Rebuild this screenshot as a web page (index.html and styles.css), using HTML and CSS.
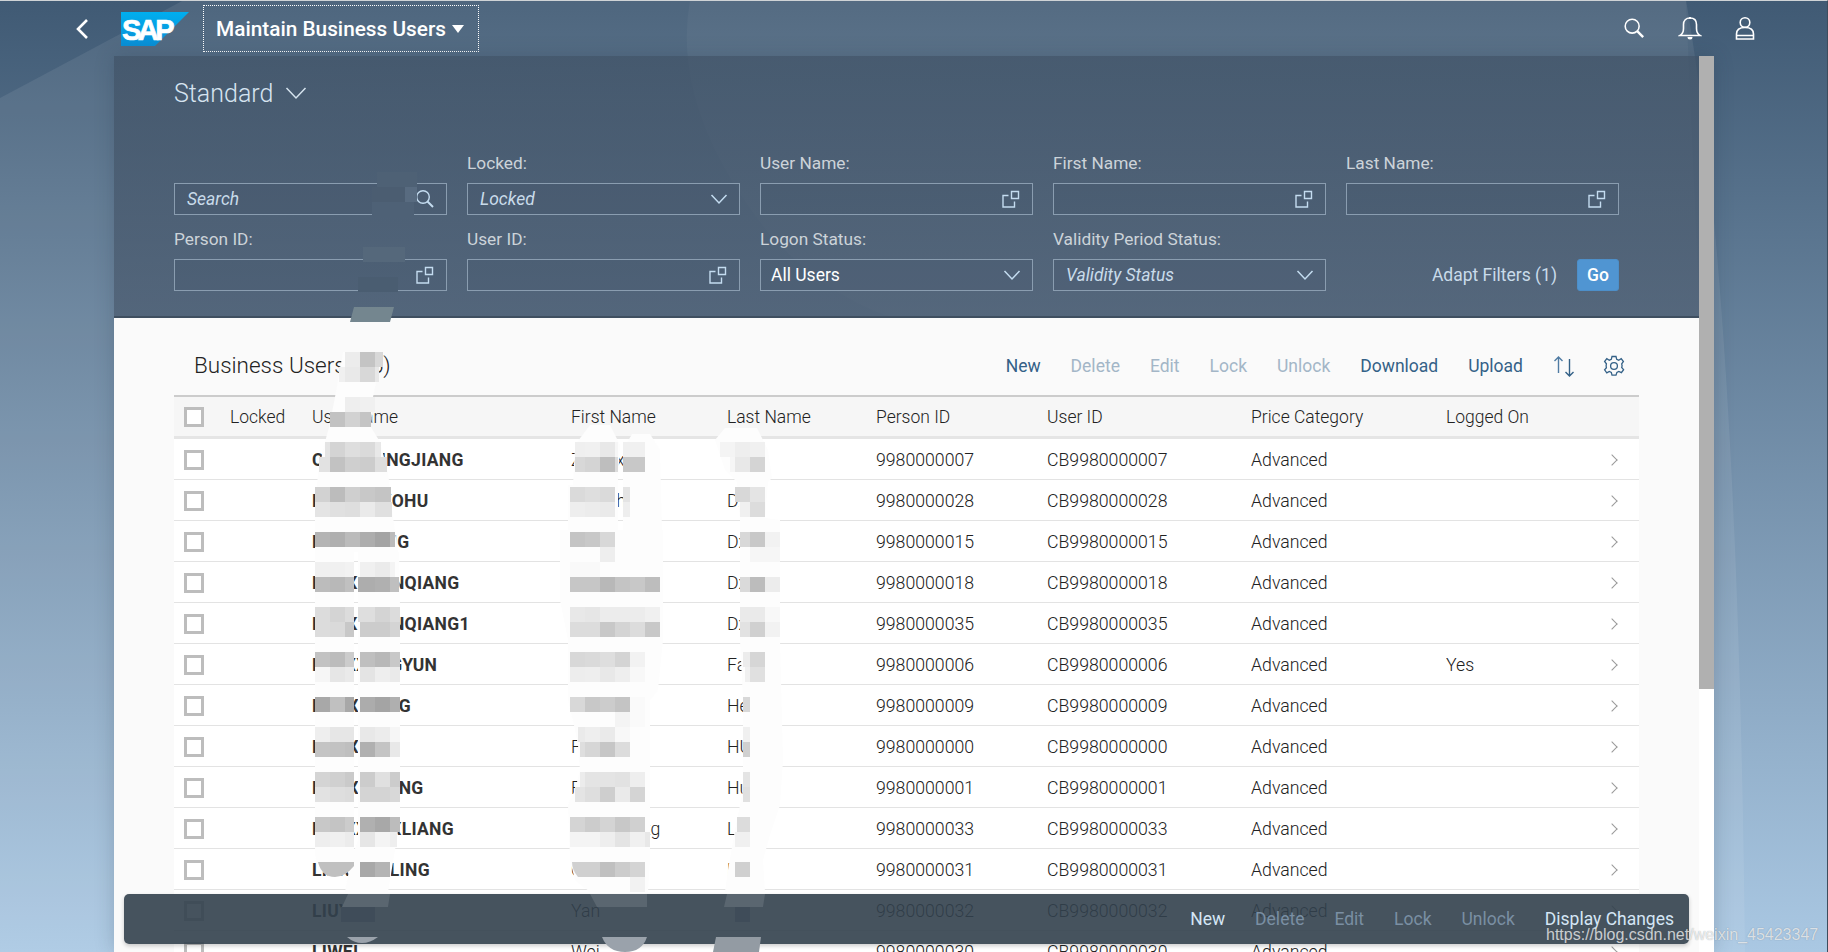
FILE: index.html
```html
<!DOCTYPE html>
<html lang="en">
<head>
<meta charset="utf-8">
<title>Maintain Business Users</title>
<link rel="stylesheet" href="styles.css">
</head>
<body>
<svg class="backdrop" width="1828" height="952" viewBox="0 0 1828 952" aria-hidden="true">
  <path d="M184 0L0 98V952H1745Q1738 300 1686 0Z" fill="#fff" opacity=".08"/>
  <path d="M690 0Q670 110 770 235Q830 300 900 320H1700L1686 0Z" fill="#fff" opacity=".035"/>
</svg>

<header class="shell">
  <button class="back" aria-label="Back">
    <svg width="14" height="22" viewBox="0 0 14 22"><path d="M12 2L3 11l9 9" fill="none" stroke="#fff" stroke-width="2.6"/></svg>
  </button>
  <svg class="logo" width="68" height="34" viewBox="0 0 68 34">
    <defs><linearGradient id="sap" x1="0" y1="0" x2="0" y2="1"><stop offset="0" stop-color="#00aeef"/><stop offset="1" stop-color="#0a8fd6"/></linearGradient></defs>
    <path d="M0 0H68L34 34H0Z" fill="url(#sap)"/>
    <text x="1" y="28" class="logo-text">SAP</text>
  </svg>
  <div class="app-title">Maintain Business Users<span class="caret"></span></div>
  <div class="shell-actions">
    <svg width="22" height="22" viewBox="0 0 24 24"><circle cx="10" cy="10" r="7.6" fill="none" stroke="#fff" stroke-width="1.7"/><path d="M15.5 15.5L22 22" stroke="#fff" stroke-width="2.6"/></svg>
    <svg width="24" height="24" viewBox="0 0 24 24"><path d="M2 19.5c2.5-1.5 3.5-3.5 3.5-7V8.5C5.500 4.500 8 2 12 2s6.500 2.500 6.500 6.500v4c0 3.500 1 5.500 3.500 7z" fill="none" stroke="#fff" stroke-width="1.6"/><path d="M9.500 21h5a2.500 2.500 0 0 1-5 0zM11 1h2v2h-2z" fill="#fff"/></svg>
    <svg width="20" height="24" viewBox="0 0 20 24"><circle cx="10" cy="6.500" r="4.800" fill="none" stroke="#fff" stroke-width="1.600"/><path d="M1.500 23v-5c0-4 3-6.500 8.500-6.500s8.500 2.500 8.500 6.500v5zM1.500 19.500h17" fill="none" stroke="#fff" stroke-width="1.600"/></svg>
  </div>
</header>

<div class="frame">
  <main class="content">
    <section class="filterbar">
      <h1 class="variant">Standard
        <svg width="22" height="14" viewBox="0 0 22 14"><path d="M1.500 2L11 12l9.500-10" fill="none" stroke="#d5e3ee" stroke-width="1.500"/></svg>
      </h1>
      <div class="filters">
        <div class="field">
          <span class="flabel"></span>
          <div class="input"><span class="ph">Search</span>
            <svg class="ico" width="20" height="20" viewBox="0 0 20 20"><circle cx="8" cy="8" r="6.300" fill="none" stroke="#c4dcf0" stroke-width="1.400"/><path d="M12.500 12.500L18 18" stroke="#c4dcf0" stroke-width="2"/></svg>
          </div>
        </div>
        <div class="field">
          <span class="flabel">Locked:</span>
          <div class="input"><span class="ph">Locked</span>
            <svg class="ico" width="18" height="12" viewBox="0 0 18 12"><path d="M1.500 2L9 10l7.500-8" fill="none" stroke="#c4dcf0" stroke-width="1.500"/></svg>
          </div>
        </div>
        <div class="field">
          <span class="flabel">User Name:</span>
          <div class="input">
            <svg class="ico" width="20" height="20" viewBox="0 0 20 20"><path d="M10.500 2.500h7v7h-7zM7.500 6.500h-5.500v11.500h11.500v-5.500" fill="none" stroke="#c4dcf0" stroke-width="1.400"/></svg>
          </div>
        </div>
        <div class="field">
          <span class="flabel">First Name:</span>
          <div class="input">
            <svg class="ico" width="20" height="20" viewBox="0 0 20 20"><path d="M10.500 2.500h7v7h-7zM7.500 6.500h-5.500v11.500h11.500v-5.500" fill="none" stroke="#c4dcf0" stroke-width="1.400"/></svg>
          </div>
        </div>
        <div class="field">
          <span class="flabel">Last Name:</span>
          <div class="input">
            <svg class="ico" width="20" height="20" viewBox="0 0 20 20"><path d="M10.500 2.500h7v7h-7zM7.500 6.500h-5.500v11.500h11.500v-5.500" fill="none" stroke="#c4dcf0" stroke-width="1.400"/></svg>
          </div>
        </div>
        <div class="field">
          <span class="flabel">Person ID:</span>
          <div class="input">
            <svg class="ico" width="20" height="20" viewBox="0 0 20 20"><path d="M10.500 2.500h7v7h-7zM7.500 6.500h-5.500v11.500h11.500v-5.500" fill="none" stroke="#c4dcf0" stroke-width="1.400"/></svg>
          </div>
        </div>
        <div class="field">
          <span class="flabel">User ID:</span>
          <div class="input">
            <svg class="ico" width="20" height="20" viewBox="0 0 20 20"><path d="M10.500 2.500h7v7h-7zM7.500 6.500h-5.500v11.500h11.500v-5.500" fill="none" stroke="#c4dcf0" stroke-width="1.400"/></svg>
          </div>
        </div>
        <div class="field">
          <span class="flabel">Logon Status:</span>
          <div class="input"><span class="val">All Users</span>
            <svg class="ico" width="18" height="12" viewBox="0 0 18 12"><path d="M1.500 2L9 10l7.500-8" fill="none" stroke="#c4dcf0" stroke-width="1.500"/></svg>
          </div>
        </div>
        <div class="field">
          <span class="flabel">Validity Period Status:</span>
          <div class="input"><span class="ph">Validity Status</span>
            <svg class="ico" width="18" height="12" viewBox="0 0 18 12"><path d="M1.500 2L9 10l7.500-8" fill="none" stroke="#c4dcf0" stroke-width="1.500"/></svg>
          </div>
        </div>
        <div class="field actions">
          <span class="adapt">Adapt Filters (1)</span>
          <button class="go">Go</button>
        </div>
      </div>
    </section>

    <section class="list">
      <div class="toolbar">
        <h2 class="list-title">Business Users (36)</h2>
        <div class="tools">
          <span class="tool">New</span>
          <span class="tool off">Delete</span>
          <span class="tool off">Edit</span>
          <span class="tool off">Lock</span>
          <span class="tool off">Unlock</span>
          <span class="tool">Download</span>
          <span class="tool">Upload</span>
          <svg class="sort" width="22" height="22" viewBox="0 0 22 22"><path d="M5.500 18V2M1.500 6l4-4 4 4" fill="none" stroke="#4f7ba3" stroke-width="1.400"/><path d="M16.500 4v17M12.500 17l4 4 4-4" fill="none" stroke="#346187" stroke-width="1.400"/></svg>
          <svg width="22" height="22" viewBox="0 0 22 22"><path d="M9 1.500h4l.7 2.800 2 .9 2.500-1.500 2.200 2.800-1.700 2.300.4 2-.4 1.700 1.900 2.200-2.200 3-2.600-1.300-1.900 1-.9 2.800H9l-.7-2.800-2-1-2.500 1.400-2.200-3 1.800-2.100-.3-1.900.3-2L1.600 6.500l2.200-2.800 2.500 1.500 2-.9z" fill="none" stroke="#346187" stroke-width="1.300"/><circle cx="11" cy="11" r="3.400" fill="none" stroke="#346187" stroke-width="1.300"/></svg>
        </div>
      </div>
      <table class="users">
        <colgroup>
          <col class="c-check"><col class="c-locked"><col class="c-user"><col class="c-first"><col class="c-last"><col class="c-person"><col class="c-uid"><col class="c-price"><col class="c-logged"><col class="c-nav">
        </colgroup>
        <thead>
          <tr><th><span class="box"></span></th><th>Locked</th><th>User Name</th><th>First Name</th><th>Last Name</th><th>Person ID</th><th>User ID</th><th>Price Category</th><th>Logged On</th><th></th></tr>
        </thead>
        <tbody>
          <tr><td><span class="box"></span></td><td></td><td class="uname">CXXXXXINGJIANG</td><td>Zxxxxxa</td><td></td><td>9980000007</td><td>CB9980000007</td><td>Advanced</td><td></td><td><span class="nav"></span></td></tr>
          <tr><td><span class="box"></span></td><td></td><td class="uname">DXXXXXXOHU</td><td>Xxxxxhu</td><td>Dxxx</td><td>9980000028</td><td>CB9980000028</td><td>Advanced</td><td></td><td><span class="nav"></span></td></tr>
          <tr><td><span class="box"></span></td><td></td><td class="uname">DXXXXXXIG</td><td>Xxxx</td><td>Dxxx</td><td>9980000015</td><td>CB9980000015</td><td>Advanced</td><td></td><td><span class="nav"></span></td></tr>
          <tr><td><span class="box"></span></td><td></td><td class="uname">DXXXXXXNQIANG</td><td>Xxxxx</td><td>Dxxx</td><td>9980000018</td><td>CB9980000018</td><td>Advanced</td><td></td><td><span class="nav"></span></td></tr>
          <tr><td><span class="box"></span></td><td></td><td class="uname">DXXXXXXNQIANG1</td><td>Xxxxx</td><td>Dxxx</td><td>9980000035</td><td>CB9980000035</td><td>Advanced</td><td></td><td><span class="nav"></span></td></tr>
          <tr><td><span class="box"></span></td><td></td><td class="uname">FXXXXXXGYUN</td><td>Xxxxx</td><td>Fan</td><td>9980000006</td><td>CB9980000006</td><td>Advanced</td><td>Yes</td><td><span class="nav"></span></td></tr>
          <tr><td><span class="box"></span></td><td></td><td class="uname">HXXXXXXIG</td><td>Xxxxx</td><td>Hexx</td><td>9980000009</td><td>CB9980000009</td><td>Advanced</td><td></td><td><span class="nav"></span></td></tr>
          <tr><td><span class="box"></span></td><td></td><td class="uname">HXXXXX</td><td>Fxxxx</td><td>HUxx</td><td>9980000000</td><td>CB9980000000</td><td>Advanced</td><td></td><td><span class="nav"></span></td></tr>
          <tr><td><span class="box"></span></td><td></td><td class="uname">HXXXXXXING</td><td>Fxxxx</td><td>Huxx</td><td>9980000001</td><td>CB9980000001</td><td>Advanced</td><td></td><td><span class="nav"></span></td></tr>
          <tr><td><span class="box"></span></td><td></td><td class="uname">LXXXXXXXLIANG</td><td>Xxxxxxxxxg</td><td>Lixx</td><td>9980000033</td><td>CB9980000033</td><td>Advanced</td><td></td><td><span class="nav"></span></td></tr>
          <tr><td><span class="box"></span></td><td></td><td class="uname">LIXXXXXILING</td><td>Cxxxx</td><td>Lxxx</td><td>9980000031</td><td>CB9980000031</td><td>Advanced</td><td></td><td><span class="nav"></span></td></tr>
          <tr><td><span class="box"></span></td><td></td><td class="uname">LIUY</td><td>Yan</td><td></td><td>9980000032</td><td>CB9980000032</td><td>Advanced</td><td></td><td><span class="nav"></span></td></tr>
          <tr><td><span class="box"></span></td><td></td><td class="uname">LIWEI</td><td>Wei</td><td></td><td>9980000030</td><td>CB9980000030</td><td>Advanced</td><td></td><td><span class="nav"></span></td></tr>
        </tbody>
      </table>
    </section>
  </main>
  <div class="scrollbar"><div class="thumb"></div></div>
</div>

<footer class="footer">
  <span class="fbtn">New</span>
  <span class="fbtn off">Delete</span>
  <span class="fbtn off">Edit</span>
  <span class="fbtn off">Lock</span>
  <span class="fbtn off">Unlock</span>
  <span class="fbtn">Display Changes</span>
</footer>

<svg class="mask" width="1828" height="952" viewBox="0 0 1828 952" aria-hidden="true">
  <g fill="#4c5f74">
    <rect width="40" x="377" y="172" height="15" fill="#4e6175"/>
    <rect width="33" x="372" y="187" height="15" fill="#4b5d71"/>
    <rect width="12" x="405" y="187" height="15" fill="#586b80"/>
    <rect width="42" x="372" y="202" height="15" fill="#4e6176"/>
    <rect width="42" x="363" y="247" height="15" fill="#55687b"/>
    <rect width="40" x="358" y="277" height="15" fill="#4a5d71"/>
  </g>
  <path d="M354 307H394L390 322H350Z" fill="#74868f"/>

  <g fill="#fdfdfd">
    <path d="M343 352H383L373 397L371 427L380 442L388 472L393 517L398 552H315L315 517L318 472L325 442L329 427L335 397Z"/>
    <path d="M315 552H354V865Q345 877 335 877Q320 877 315 855Z"/>
    <path d="M358 552H399L400 607V817L395 850L388 892H345L351 860L358 840Z"/>
    <path d="M575 445L590 425H610L620 445L618 480V530H568V485H573Z"/>
    <path d="M623 450L632 434H650L660 450L662 530H623Z"/>
    <path d="M560 530H663V640L658 690L650 700V860L648 892H590L575 880L570 860L568 805L575 790L580 770L578 745L574 725L568 700V640L560 600Z"/>
    <path d="M715 440L725 428H757L768 450L772 478L768 482L765 518L780 520V640L783 760L780 805L770 835L763 860L765 892H725L728 870L735 830L743 790V700L740 640V520L737 482L725 470Z"/>
  </g>

  <g class="cells">
    <g transform="translate(0 352)"><rect x="345" fill="#ececec"/><rect x="360" fill="#c4c4c4"/><rect x="375" width="8" fill="#d8d8d8"/></g>
    <g transform="translate(0 367)"><rect x="339" width="6" fill="#f0f0f0"/><rect x="345" fill="#e9e9e9"/><rect x="360" fill="#d8d8d8"/><rect x="375" width="4" fill="#e8e8e8"/></g>
    <g transform="translate(0 397)"><rect x="345" fill="#eee"/><rect x="360" fill="#f0f0f0"/></g>
    <g transform="translate(0 412)"><rect x="330" fill="#c2c2c2"/><rect x="345" fill="#d2d2d2"/><rect x="360" width="11" fill="#c4c4c4"/></g>
    <g transform="translate(0 442)"><rect x="325" width="5" fill="#e4e4e4"/><rect x="330" fill="#d4d4d4"/><rect x="345" fill="#dedede"/><rect x="360" fill="#dadada"/><rect x="375" width="6" fill="#e8e8e8"/>
      <rect x="575" width="10" fill="#efefef"/><rect x="585" fill="#f0f0f0"/><rect x="600" fill="#e8e8e8"/><rect x="615" width="3" fill="#f6f6f6"/><rect x="623" width="22" fill="#f0f0f0"/>
      <rect x="720" fill="#f4f4f4"/><rect x="735" fill="#eee"/><rect x="750" fill="#f0f0f0"/></g>
    <g transform="translate(0 457)"><rect x="319" width="11" fill="#e2e2e2"/><rect x="330" fill="#c2c2c2"/><rect x="345" fill="#cfcfcf"/><rect x="360" fill="#ccc"/><rect x="375" width="12" fill="#dedede"/>
      <rect x="575" width="10" fill="#d8d8d8"/><rect x="585" fill="#d4d4d4"/><rect x="600" fill="#bebebe"/><rect x="615" width="3" fill="#dcdcdc"/><rect x="623" width="22" fill="#c8c8c8"/>
      <rect x="730" width="5" fill="#f6f6f6"/><rect x="735" fill="#e8e8e8"/><rect x="750" fill="#d4d4d4"/></g>
    <g transform="translate(0 487)"><rect x="315" fill="#d2d2d2"/><rect x="330" fill="#bcbcbc"/><rect x="345" fill="#cfcfcf"/><rect x="360" fill="#c8c8c8"/><rect x="375" width="16" fill="#c4c4c4"/>
      <rect x="570" fill="#dadada"/><rect x="585" fill="#dedede"/><rect x="600" fill="#dadada"/><rect x="623" width="7" fill="#e4e4e4"/>
      <rect x="735" fill="#d8d8d8"/><rect x="750" fill="#e4e4e4"/></g>
    <g transform="translate(0 502)"><rect x="315" fill="#e4e4e4"/><rect x="330" fill="#e0e0e0"/><rect x="345" fill="#dedede"/><rect x="360" fill="#eaeaea"/><rect x="375" width="17" fill="#e0e0e0"/>
      <rect x="570" fill="#eee"/><rect x="585" fill="#ececec"/><rect x="600" fill="#eaeaea"/><rect x="623" width="7" fill="#eee"/>
      <rect x="740" width="10" fill="#f0f0f0"/><rect x="750" fill="#dcdcdc"/></g>
    <g transform="translate(0 532)"><rect x="315" fill="#b4b4b4"/><rect x="330" fill="#afafaf"/><rect x="345" fill="#bbb"/><rect x="360" fill="#adadad"/><rect x="375" fill="#a4a4a4"/><rect x="390" width="5" fill="#bbb"/>
      <rect x="570" fill="#c4c4c4"/><rect x="585" fill="#c8c8c8"/><rect x="600" fill="#d8d8d8"/>
      <rect x="740" width="10" fill="#d8d8d8"/><rect x="750" fill="#c8c8c8"/><rect x="765" fill="#f2f2f2"/></g>
    <g transform="translate(0 547)"><rect x="600" fill="#eee"/><rect x="750" fill="#f6f6f6"/><rect x="765" fill="#f6f6f6"/></g>
    <g transform="translate(0 562)"><rect x="315" fill="#f0f0f0"/><rect x="330" fill="#f0f0f0"/><rect x="345" width="9" fill="#f2f2f2"/><rect x="360" fill="#f0f0f0"/><rect x="375" fill="#ebebeb"/><rect x="390" width="5" fill="#f4f4f4"/>
      <rect x="570" fill="#f9f9f9"/><rect x="585" fill="#f9f9f9"/></g>
    <g transform="translate(0 577)"><rect x="315" fill="#bcbcbc"/><rect x="330" fill="#b8b8b8"/><rect x="345" width="9" fill="#c0c0c0"/><rect x="358" width="17" fill="#adadad"/><rect x="375" fill="#b0b0b0"/><rect x="390" width="9" fill="#bfbfbf"/>
      <rect x="570" fill="#c6c6c6"/><rect x="585" fill="#c6c6c6"/><rect x="600" fill="#b8b8b8"/><rect x="615" fill="#c4c4c4"/><rect x="630" fill="#c8c8c8"/><rect x="645" fill="#bdbdbd"/>
      <rect x="740" width="10" fill="#dadada"/><rect x="750" fill="#bcbcbc"/><rect x="765" fill="#ececec"/></g>
    <g transform="translate(0 607)"><rect x="315" fill="#dcdcdc"/><rect x="330" fill="#d4d4d4"/><rect x="345" width="9" fill="#dcdcdc"/><rect x="358" width="17" fill="#dedede"/><rect x="375" fill="#d4d4d4"/><rect x="390" width="10" fill="#dcdcdc"/>
      <rect x="570" fill="#e8e8e8"/><rect x="585" fill="#e6e6e6"/><rect x="600" fill="#ececec"/><rect x="615" fill="#ececec"/><rect x="630" fill="#ececec"/><rect x="645" fill="#f0f0f0"/>
      <rect x="740" width="10" fill="#eaeaea"/><rect x="750" fill="#eaeaea"/><rect x="765" fill="#f8f8f8"/></g>
    <g transform="translate(0 622)"><rect x="315" fill="#dcdcdc"/><rect x="330" fill="#dadada"/><rect x="345" width="9" fill="#c8c8c8"/><rect x="360" fill="#ccc"/><rect x="375" fill="#ccc"/><rect x="390" width="10" fill="#d4d4d4"/>
      <rect x="570" fill="#dcdcdc"/><rect x="585" fill="#dcdcdc"/><rect x="600" fill="#c8c8c8"/><rect x="615" fill="#d4d4d4"/><rect x="630" fill="#dcdcdc"/><rect x="645" fill="#c8c8c8"/>
      <rect x="740" width="10" fill="#e2e2e2"/><rect x="750" fill="#d0d0d0"/><rect x="765" fill="#f2f2f2"/></g>
    <g transform="translate(0 652)"><rect x="315" fill="#c2c2c2"/><rect x="330" fill="#bcbcbc"/><rect x="345" width="9" fill="#ccc"/><rect x="360" fill="#bfbfbf"/><rect x="375" fill="#b8b8b8"/><rect x="390" width="10" fill="#c8c8c8"/>
      <rect x="570" fill="#d8d8d8"/><rect x="585" fill="#dadada"/><rect x="600" fill="#dedede"/><rect x="615" fill="#d4d4d4"/><rect x="630" fill="#f2f2f2"/>
      <rect x="743" width="7" fill="#ececec"/><rect x="750" fill="#d6d6d6"/></g>
    <g transform="translate(0 667)"><rect x="315" fill="#f6f6f6"/><rect x="330" fill="#e6e6e6"/><rect x="345" width="9" fill="#eaeaea"/><rect x="360" fill="#e4e4e4"/><rect x="375" fill="#eee"/><rect x="390" width="10" fill="#eaeaea"/>
      <rect x="570" fill="#ededed"/><rect x="585" fill="#eee"/><rect x="600" fill="#e8e8e8"/><rect x="615" fill="#eee"/><rect x="630" fill="#f8f8f8"/>
      <rect x="745" width="5" fill="#f0f0f0"/><rect x="750" fill="#e0e0e0"/></g>
    <g transform="translate(0 697)"><rect x="315" fill="#a8a8a8"/><rect x="330" fill="#c0c0c0"/><rect x="345" width="9" fill="#a8a8a8"/><rect x="360" fill="#acacac"/><rect x="375" fill="#a4a4a4"/><rect x="390" width="10" fill="#afafaf"/>
      <rect x="570" fill="#d8d8d8"/><rect x="585" fill="#c8c8c8"/><rect x="600" fill="#ccc"/><rect x="615" fill="#c4c4c4"/><rect x="630" fill="#fafafa"/>
      <rect x="743" width="7" fill="#d8d8d8"/></g>
    <g transform="translate(0 712)"><rect x="615" fill="#f4f4f4"/><rect x="630" fill="#fafafa"/></g>
    <g transform="translate(0 727)"><rect x="315" fill="#eee"/><rect x="330" fill="#e6e6e6"/><rect x="345" width="9" fill="#e6e6e6"/><rect x="360" fill="#e8e8e8"/><rect x="375" fill="#ececec"/><rect x="390" width="10" fill="#f6f6f6"/>
      <rect x="578" width="7" fill="#eaeaea"/><rect x="585" fill="#eee"/><rect x="600" fill="#eaeaea"/><rect x="615" fill="#f8f8f8"/>
      <rect x="743" width="7" fill="#f0f0f0"/></g>
    <g transform="translate(0 742)"><rect x="315" fill="#c4c4c4"/><rect x="330" fill="#c2c2c2"/><rect x="345" width="9" fill="#bfbfbf"/><rect x="360" fill="#b0b0b0"/><rect x="375" fill="#c4c4c4"/><rect x="390" width="10" fill="#e8e8e8"/>
      <rect x="580" width="5" fill="#dedede"/><rect x="585" fill="#d6d6d6"/><rect x="600" fill="#c6c6c6"/><rect x="615" fill="#dcdcdc"/>
      <rect x="743" width="7" fill="#d0d0d0"/></g>
    <g transform="translate(0 772)"><rect x="315" fill="#d4d4d4"/><rect x="330" fill="#d0d0d0"/><rect x="345" width="9" fill="#cacaca"/><rect x="360" fill="#ccc"/><rect x="375" fill="#e0e0e0"/><rect x="390" width="10" fill="#ccc"/>
      <rect x="580" width="5" fill="#ececec"/><rect x="585" fill="#e4e4e4"/><rect x="600" fill="#e4e4e4"/><rect x="615" fill="#e2e2e2"/><rect x="630" fill="#eee"/>
      <rect x="743" width="7" fill="#e4e4e4"/></g>
    <g transform="translate(0 787)"><rect x="315" fill="#e2e2e2"/><rect x="330" fill="#dedede"/><rect x="345" width="9" fill="#dcdcdc"/><rect x="360" fill="#d4d4d4"/><rect x="375" fill="#d4d4d4"/><rect x="390" width="10" fill="#d8d8d8"/>
      <rect x="575" width="10" fill="#e4e4e4"/><rect x="585" fill="#dedede"/><rect x="600" fill="#cecece"/><rect x="615" fill="#eaeaea"/><rect x="630" fill="#d4d4d4"/>
      <rect x="743" width="7" fill="#e0e0e0"/></g>
    <g transform="translate(0 817)"><rect x="315" fill="#c8c8c8"/><rect x="330" fill="#c4c4c4"/><rect x="345" width="9" fill="#ccc"/><rect x="360" fill="#b0b0b0"/><rect x="375" fill="#a8a8a8"/><rect x="390" width="10" fill="#bcbcbc"/>
      <rect x="570" fill="#d4d4d4"/><rect x="585" fill="#ccc"/><rect x="600" fill="#d4d4d4"/><rect x="615" fill="#c8c8c8"/><rect x="630" fill="#d0d0d0"/>
      <rect x="737" width="13" fill="#dcdcdc"/></g>
    <g transform="translate(0 832)"><rect x="315" fill="#eee"/><rect x="330" fill="#f0f0f0"/><rect x="345" width="9" fill="#ececec"/><rect x="360" fill="#e6e6e6"/><rect x="375" fill="#f4f4f4"/><rect x="390" width="7" fill="#eee"/>
      <rect x="570" fill="#f4f4f4"/><rect x="585" fill="#f4f4f4"/><rect x="600" fill="#eee"/><rect x="615" fill="#e4e4e4"/><rect x="630" fill="#f0f0f0"/><rect x="645" width="5" fill="#e8e8e8"/>
      <rect x="735" fill="#f0f0f0"/></g>
    <g transform="translate(0 862)"><path d="M318 0H354V4Q345 15 335 15Q322 15 318 0Z" fill="#c0c0c0"/><rect x="360" fill="#a8a8a8"/><rect x="375" width="15" fill="#b4b4b4"/>
      <path d="M572 0H585V15H578Q572 8 572 0Z" fill="#d0d0d0"/><rect x="585" fill="#d0d0d0"/><rect x="600" fill="#c0c0c0"/><rect x="615" fill="#ccc"/><rect x="630" fill="#d4d4d4"/>
      <rect x="735" fill="#d0d0d0"/></g>
    <g transform="translate(0 877)"><rect x="630" fill="#f2f2f2"/></g>
  </g>

  <g fill="#5a6670">
    <path d="M348 894H390L388 907H342Z"/>
    <path d="M590 894H647V907H597Z"/>
    <path d="M727 894H765L763 907H724Z"/>
  </g>
  <g fill="#3f4c59">
    <rect x="341" y="907" width="34" height="15"/>
    <rect x="735" y="907" width="15" height="15"/>
  </g>
  <path d="M347 937H378Q370 943 362 943Q354 943 347 937Z" fill="#9aa2ab"/>
  <path d="M602 937H647Q642 952 625 952Q608 952 602 937Z" fill="#9aa2ab"/>
  <path d="M716 937H761L759 952H713Z" fill="#939ba3"/>
</svg>

<div class="watermark">https://blog.csdn.net/weixin_45423347</div>
</body>
</html>
```

FILE: styles.css
```css
* { box-sizing: border-box; }

html, body {
  margin: 0;
  height: 952px;
  overflow: hidden;
}

body {
  position: relative;
  font-family: Roboto, "Liberation Sans", sans-serif;
  font-size: 17.5px;
  color: #333;
  background: linear-gradient(180deg, #405a74 0, #aac8e3 100%);
  border-top: 1px solid #cfd3d6;
  border-right: 1px solid #3d4d5d;
}

.backdrop, .mask {
  position: absolute;
  left: 0;
  top: -1px;
  pointer-events: none;
}

.mask .cells rect { height: 15px; }
.mask .cells rect:not([width]) { width: 15px; }

/* Shell header */
.shell {
  position: relative;
  height: 55px;
  display: flex;
  align-items: center;
  padding-left: 75px;
}

.back {
  width: 14px;
  height: 22px;
  padding: 0;
  border: 0;
  background: none;
  display: flex;
  margin-right: 32px;
}

.logo { margin-right: 14px; }

.logo-text {
  font-family: "Liberation Sans", sans-serif;
  font-weight: 700;
  font-size: 29px;
  letter-spacing: -3.5px;
  fill: #fff;
  stroke: #fff;
  stroke-width: .7px;
}

.app-title {
  width: 276px;
  height: 47px;
  padding-left: 12px;
  display: flex;
  align-items: center;
  border: 1px dotted #fff;
  color: #fff;
  font-size: 20.8px;
  font-weight: 500;
}

.caret {
  margin-left: 6px;
  border-left: 6px solid transparent;
  border-right: 6px solid transparent;
  border-top: 8px solid #fff;
}

.shell-actions {
  margin-left: auto;
  margin-right: 72px;
  margin-bottom: 2px;
  display: flex;
  align-items: center;
  gap: 33px;
}

/* Main frame */
.frame {
  position: relative;
  width: 1600px;
  height: 896px;
  margin-left: 114px;
  display: flex;
  box-shadow: 0 0 18px rgba(30, 50, 70, .22);
}

.content {
  flex: 1;
  min-width: 0;
  display: flex;
  flex-direction: column;
}

.scrollbar {
  width: 15px;
  background: #fff;
}

.thumb {
  height: 633px;
  background: #b0b0b0;
}

/* Filter bar */
.filterbar {
  height: 262px;
  padding: 21px 80px 0 60px;
  background: linear-gradient(180deg, rgba(63, 81, 101, .7) 0, rgba(71, 87, 107, .7) 100%);
  border-bottom: 2px solid #3f4f60;
}

.variant {
  margin: 0 0 42px;
  height: 32px;
  display: flex;
  align-items: center;
  gap: 12px;
  font-size: 25px;
  font-weight: 300;
  color: #d6e4f0;
}

.filters {
  display: grid;
  grid-template-columns: repeat(5, 273px);
  column-gap: 20px;
  row-gap: 12px;
}

.field {
  height: 64px;
  display: flex;
  flex-direction: column;
}

.flabel {
  height: 32px;
  padding-bottom: 8px;
  line-height: 24px;
  font-size: 17.3px;
  font-weight: 400;
  color: #ccd3d9;
}

.input {
  height: 32px;
  padding: 0 11px 0 12px;
  display: flex;
  align-items: center;
  justify-content: space-between;
  border: 1px solid #8a9db0;
  background: rgba(60, 78, 98, .18);
}

.ico { margin-left: auto; flex: none; }

.ph {
  font-style: italic;
  font-weight: 400;
  color: #c9dbea;
}

.val {
  margin-left: -2px;
  color: #fff;
}

.actions {
  flex-direction: row;
  align-items: flex-end;
  justify-content: flex-end;
  gap: 20px;
}

.adapt {
  height: 32px;
  line-height: 32px;
  font-weight: 400;
  color: #c9dbea;
}

.go {
  width: 42px;
  height: 32px;
  padding: 0;
  border: 1px solid #4d8fc9;
  border-radius: 3px;
  background: #5095d2;
  color: #fff;
  font: 500 17.5px Roboto, sans-serif;
}

/* List */
.list {
  flex: 1;
  min-height: 0;
  overflow: hidden;
  padding: 18px 60px 0;
  background: #fafafa;
}

.toolbar {
  height: 59px;
  padding: 0 14px 0 20px;
  display: flex;
  align-items: center;
  justify-content: space-between;
}

.list-title {
  margin: 0 0 2px;
  font-size: 22.5px;
  font-weight: 300;
  color: #222;
}

.tools {
  display: flex;
  align-items: center;
  gap: 30px;
  color: #346187;
}

.tool.off { color: #a3b6c7; }
.sort { margin-right: -2px; }

.users {
  width: 1465px;
  table-layout: fixed;
  border-collapse: separate;
  border-spacing: 0;
}

.c-check  { width: 56px; }
.c-locked { width: 82px; }
.c-user   { width: 259px; }
.c-first  { width: 156px; }
.c-last   { width: 149px; }
.c-person { width: 171px; }
.c-uid    { width: 204px; }
.c-price  { width: 195px; }
.c-logged { width: 154px; }
.c-nav    { width: 39px; }

.users th {
  height: 44px;
  padding: 0;
  text-align: left;
  font-weight: 300;
  font-size: 17.5px;
  color: #222;
  background: #f6f6f6;
  border-top: 2px solid #ccc;
  border-bottom: 3px solid #e5e5e5;
}

.users td {
  height: 41px;
  padding: 1px 0 0;
  font-size: 17.7px;
  font-weight: 300;
  color: #222;
  background: #fff;
  border-bottom: 1px solid #e3e3e3;
  white-space: nowrap;
  overflow: hidden;
}

.users .uname {
  font-size: 17.5px;
  font-weight: 700;
  letter-spacing: .3px;
  color: #333;
}

.box {
  display: block;
  width: 20px;
  height: 20px;
  margin-left: 10px;
  border: 3px solid #bdbdbd;
  background: #fff;
}

.nav {
  display: block;
  width: 8px;
  height: 8px;
  margin-left: 8px;
  border-top: 1px solid #999;
  border-right: 1px solid #999;
  transform: rotate(45deg);
}

/* Floating footer */
.footer {
  position: absolute;
  left: 124px;
  top: 893px;
  width: 1565px;
  height: 50px;
  padding: 0 15px 0 0;
  display: flex;
  align-items: center;
  justify-content: flex-end;
  gap: 30px;
  border-radius: 5px;
  background: rgba(50, 64, 77, .9);
  box-shadow: 0 2px 4px rgba(0, 0, 0, .2);
  color: #d5e6f5;
}

.fbtn.off { color: #7a8fa3; }

.watermark {
  position: absolute;
  left: 1546px;
  top: 924px;
  font-family: "Liberation Sans", sans-serif;
  font-size: 16px;
  line-height: 20px;
  color: rgba(255, 255, 255, .72);
  text-shadow: 0 0 1px rgba(70, 80, 90, .5);
  white-space: nowrap;
}
```
